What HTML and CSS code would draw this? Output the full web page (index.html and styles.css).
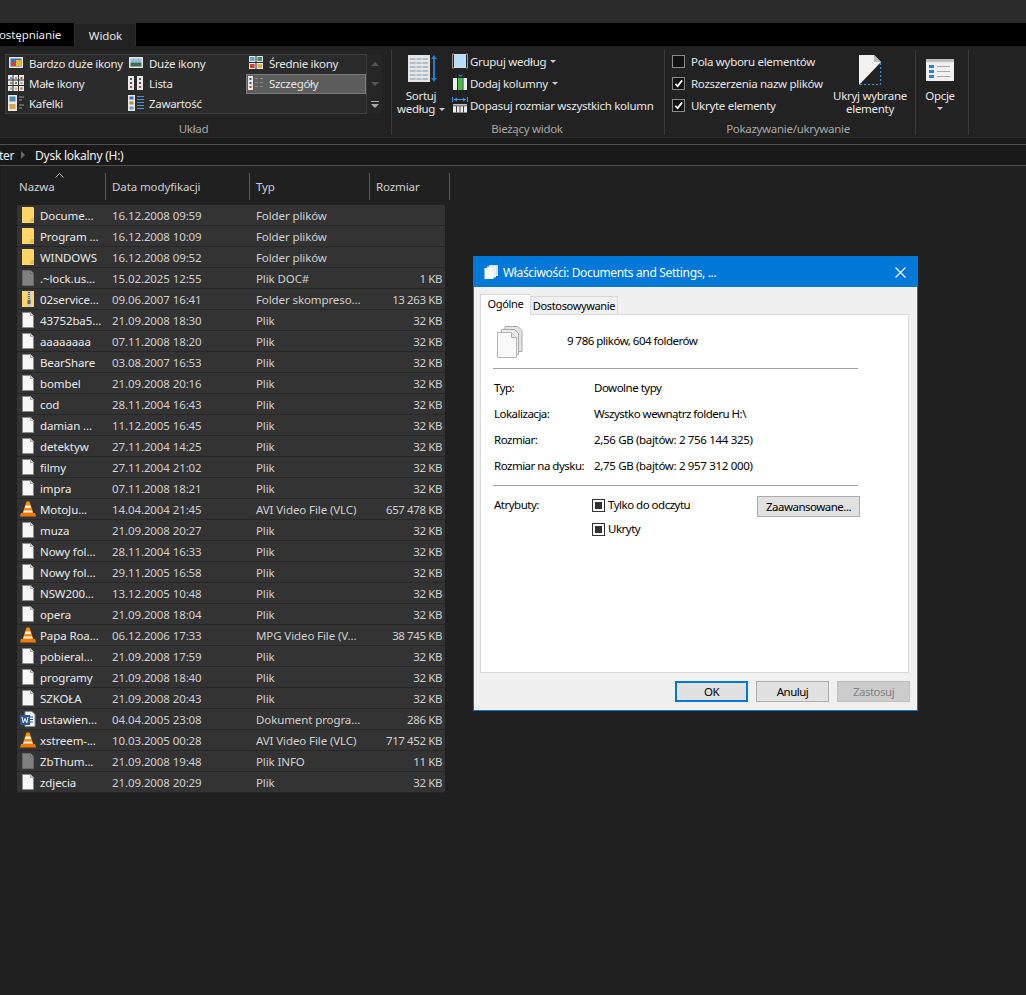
FILE: index.html
```html
<!DOCTYPE html>
<html lang="pl">
<head>
  <meta charset="UTF-8" />
  <title>Dysk lokalny (H:)</title>
  <link rel="stylesheet" href="styles.css">
</head>
<body>
  <svg class="defs" width="0" height="0">
    <symbol id="i-folder" viewBox="0 0 16 16">
      <path d="M2 0h11l1 1v15H2z" fill="#ffd768"/>
      <path d="M11 11h3v4h-4z" fill="#e9b949"/>
    </symbol>
    <symbol id="i-zip" viewBox="0 0 16 16">
      <path d="M2 0h12v16H2z" fill="#ffd768"/>
      <path d="M7 0h4v16H7z" fill="#c9c9c9"/>
      <path d="M8 1h2v1H8zm0 2h2v1H8zm0 2h2v1H8zm0 2h2v1H8zm-.5 2h3v4h-3z" fill="#666"/>
    </symbol>
    <symbol id="i-file" viewBox="0 0 16 16">
      <path d="M2.5 .5h8l3 3v12h-11z" fill="#f7f7f7" stroke="#8c8c8c"/>
      <path d="M10.5 .5v3h3" fill="#ddd" stroke="#aaa"/>
    </symbol>
    <symbol id="i-grey" viewBox="0 0 16 16">
      <path d="M2.5 .5h8l3 3v12h-11z" fill="#808080" stroke="#666"/>
      <path d="M10.5 .5v3h3" fill="#999" stroke="#666"/>
    </symbol>
    <symbol id="i-vlc" viewBox="0 0 16 16">
      <path d="M6.5 .5h3l4 12h-11z" fill="#ff8c00"/>
      <path d="M5.6 4.5h4.8l.8 2.6H4.8zM4 9.5h8l.6 2H3.4z" fill="#eee"/>
      <path d="M1 12h14l1 3.5H0z" fill="#f07800"/>
    </symbol>
    <symbol id="i-word" viewBox="0 0 16 16">
      <path d="M5 .5h7l3 3v12H5z" fill="#f4f4f4" stroke="#8c8c8c"/>
      <path d="M9 6h4M9 8.500h4M9 11h4" stroke="#2b579a"/>
      <path d="M0 4h10v10H0z" fill="#2b579a"/>
      <path d="M2 6l1.300 6 1.700-4.500 1.700 4.500L8 6" fill="none" stroke="#fff"/>
    </symbol>
    <symbol id="i-pages" viewBox="0 0 26 32">
      <path d="M8 .5h13l4 4v21H8z" fill="#e4e4e4" stroke="#aaa"/>
      <path d="M4.500 3.500h13l4 4v21h-17z" fill="#eee" stroke="#aaa"/>
      <path d="M.5 6.500h14l5 5v20H.5z" fill="#f9f9f9" stroke="#b5b5b5"/>
      <path d="M14.500 6.500v5h5" fill="#e6e6e6" stroke="#b5b5b5"/>
    </symbol>
  </svg>

  <div class="titlebar"></div>

  <div class="tabstrip">
    <span class="tab-off">ostępnianie</span>
    <span class="tab-on">Widok</span>
  </div>

  <div class="ribbon">
    <section class="group group-layout">
      <div class="group-body">
        <div class="gallery">
          <div class="gallery-grid">
            <div class="gal-item"><svg class="gal-ico" viewBox="0 0 16 16"><rect x="1" y="2" width="14" height="11" fill="#e8e8e8"/><rect x="2.500" y="3.500" width="11" height="8" fill="#3e6fb0"/><rect x="3" y="7" width="5" height="4" fill="#d9412b"/><rect x="8" y="5" width="5" height="6" fill="#e6b93a"/></svg>Bardzo duże ikony</div>
            <div class="gal-item"><svg class="gal-ico" viewBox="0 0 16 16"><rect x="1" y="2" width="14" height="11" fill="#e8e8e8"/><rect x="2.500" y="3.500" width="11" height="4" fill="#8fc0de"/><rect x="2.500" y="7.500" width="11" height="4" fill="#3f6b55"/></svg>Duże ikony</div>
            <div class="gal-item"><svg class="gal-ico" viewBox="0 0 16 16"><rect x="1" y="1" width="6.500" height="6" fill="#e8e8e8"/><rect x="8.500" y="1" width="6.500" height="6" fill="#e8e8e8"/><rect x="1" y="8" width="6.500" height="6" fill="#e8e8e8"/><rect x="8.500" y="8" width="6.500" height="6" fill="#e8e8e8"/><rect x="2" y="2" width="4.500" height="4" fill="#6f9fc9"/><rect x="9.500" y="2" width="4.500" height="4" fill="#4d8a5c"/><rect x="2" y="9" width="4.500" height="4" fill="#c8402e"/><rect x="9.500" y="9" width="4.500" height="4" fill="#e0b13a"/></svg>Średnie ikony</div>

            <div class="gal-item"><svg class="gal-ico" viewBox="0 0 16 16"><path d="M0 0h16v16H0z" fill="#e8e8e8"/><path d="M5 0v16M10.500 0v16M0 5h16M0 10.500h16" stroke="#2b2b2b"/><path d="M2 2h2v2H2z" fill="#6f9fc9"/><path d="M7 2h2v2H7z" fill="#999"/><path d="M12.500 2h2v2h-2z" fill="#c8402e"/><path d="M2 7h2v2H2z" fill="#b08a3a"/><path d="M7 7h2v2H7z" fill="#4d8a5c"/><path d="M12.500 7h2v2h-2z" fill="#999"/><path d="M2 12.500h2v2H2z" fill="#999"/><path d="M7 12.500h2v2H7z" fill="#e0b13a"/><path d="M12.500 12.500h2v2h-2z" fill="#c8402e"/></svg>Małe ikony</div>
            <div class="gal-item"><svg class="gal-ico" viewBox="0 0 16 16"><path d="M0 1h6v14H0zM9 1h6v14H9z" fill="#e8e8e8"/><path d="M2 3h2v2H2zm9 0h2v2h-2zM2 7h2v2H2zm9 0h2v2h-2z" fill="#555"/><path d="M2 11h2v2H2zm9 0h2v2h-2z" fill="#c8402e"/></svg>Lista</div>
            <div class="gal-item gal-sel"><svg class="gal-ico" viewBox="0 0 16 16"><path d="M0 1h5v14H0z" fill="#e8e8e8"/><path d="M1.500 3h2v2h-2zm0 4h2v2h-2z" fill="#555"/><path d="M1.500 11h2v2h-2z" fill="#c8402e"/><path d="M7 3.500h3m2 0h3M7 7.500h3m2 0h3M7 11.500h3m2 0h3" stroke="#8a8a8a"/></svg>Szczegóły</div>

            <div class="gal-item"><svg class="gal-ico" viewBox="0 0 16 16"><path d="M0 0h9v16H0z" fill="#e8e8e8"/><path d="M1.500 1.500h6v5h-6z" fill="#4d8ab0"/><path d="M1.500 9h6v5h-6z" fill="#d8a44a"/><path d="M11 2h5M11 5h3M11 10h5M11 13h3" stroke="#999"/></svg>Kafelki</div>
            <div class="gal-item"><svg class="gal-ico" viewBox="0 0 16 16"><path d="M0 0h7v16H0z" fill="#e8e8e8"/><path d="M1.500 1.500h4v3h-4z" fill="#3e6fb0"/><path d="M1.500 6.500h4v3h-4z" fill="#b08a3a"/><path d="M1.500 11.500h4v3h-4z" fill="#6f9fc9"/><path d="M9 1.500h7M9 4.500h7M9 7.500h7M9 10.500h7M9 13.500h7" stroke="#4f8fd8"/></svg>Zawartość</div>
          </div>
          <div class="gallery-scroll">
            <span class="sc-up"></span>
            <span class="sc-down"></span>
            <span class="sc-more"></span>
          </div>
        </div>
      </div>
      <div class="group-label">Układ</div>
    </section>

    <section class="group group-view">
      <div class="group-body">
        <div class="big-btn big-sort">
          <svg class="big-ico" width="30" height="28" viewBox="0 0 30 28">
            <rect x="0" y="0" width="22" height="27" fill="#e6e6e6"/>
            <path d="M2 4h18M2 8h18M2 12h18M2 16h18M2 20h18M2 24h18" stroke="#b4bcc6" stroke-width="2"/>
            <path d="M8 2v24M14 2v24" stroke="#e6e6e6"/>
            <path d="M26 2v23" stroke="#1f7fd0" stroke-width="2"/>
            <path d="M23 4l3-4 3 4zM23 23l3 4 3-4z" fill="#1f7fd0"/>
          </svg>
          <span>Sortuj</span>
          <span>według<i class="caret"></i></span>
        </div>
        <div class="cmds">
          <div class="cmd"><svg class="cmd-ico" viewBox="0 0 16 16"><path d="M2 1H.5v14H2M14 1h1.500v14H14" fill="none" stroke="#999"/><rect x="2.500" y="1.500" width="11" height="13" fill="#b5dcf8" stroke="#ddd"/></svg>Grupuj według<i class="caret"></i></div>
          <div class="cmd"><svg class="cmd-ico" viewBox="0 0 16 16"><path d="M6 0h5l-2.500 2z" fill="#1f7fd0"/><rect x="1" y="3" width="14" height="12" fill="#eee"/><rect x="6" y="3" width="4.500" height="12" fill="#3cc13c"/><path d="M5.500 3v12M11 3v12" stroke="#333"/></svg>Dodaj kolumny<i class="caret"></i></div>
          <div class="cmd"><svg class="cmd-ico" viewBox="0 0 16 16"><path d="M.5 0v5M15.500 0v5M2 2.500h12" stroke="#2f95e8"/><path d="M5 .5l-3 2 3 2zM11 .5l3 2-3 2z" fill="#2f95e8"/><rect x="1" y="7" width="14" height="8.500" fill="#eee"/><path d="M1 8.500h14" stroke="#888" stroke-width="2"/><path d="M4.500 9v6.500M8 9v6.500M11.500 9v6.500" stroke="#444"/></svg>Dopasuj rozmiar wszystkich kolumn</div>
        </div>
      </div>
      <div class="group-label">Bieżący widok</div>
    </section>

    <section class="group group-show">
      <div class="group-body">
        <div class="cmds">
          <div class="cmd"><span class="rb-check"></span>Pola wyboru elementów</div>
          <div class="cmd"><span class="rb-check"><svg viewBox="0 0 10 10"><path d="M1.500 5.500l2.500 2.500 5-6.500" fill="none" stroke="#fff" stroke-width="2"/></svg></span>Rozszerzenia nazw plików</div>
          <div class="cmd"><span class="rb-check"><svg viewBox="0 0 10 10"><path d="M1.500 5.500l2.500 2.500 5-6.500" fill="none" stroke="#fff" stroke-width="2"/></svg></span>Ukryte elementy</div>
        </div>
        <div class="big-btn big-hide">
          <svg class="big-ico" width="22" height="30" viewBox="0 0 22 30">
            <path d="M0 0h15l7 7v23H0z" fill="#f2f2f2"/>
            <path d="M22 7L0 30h22z" fill="#222"/>
            <path d="M21.500 8v21.500H1" fill="none" stroke="#2f95e8" stroke-dasharray="2 2"/>
            <path d="M15 0l7 7h-7z" fill="#bbb"/>
          </svg>
          <span>Ukryj wybrane</span>
          <span>elementy</span>
        </div>
      </div>
      <div class="group-label">Pokazywanie/ukrywanie</div>
    </section>

    <section class="group group-opts">
      <div class="group-body">
        <div class="big-btn big-opts">
          <svg class="big-ico" width="28" height="22" viewBox="0 0 28 22">
            <rect width="28" height="22" fill="#f0f0f0"/>
            <rect width="28" height="3" fill="#bdbdbd"/>
            <path d="M3 6h5v3H3zM3 11h5v3H3zM3 16h5v3H3z" fill="#2f7fd0"/>
            <path d="M11 7.500h13M11 12.500h13M11 17.500h13" stroke="#aaa"/>
          </svg>
          <span>Opcje</span>
          <i class="caret caret-below"></i>
        </div>
      </div>
      <div class="group-label"></div>
    </section>
  </div>

  <div class="ribbon-gap"></div>

  <div class="address">
    <span class="crumb-cut">ter</span>
    <svg class="crumb-sep" width="6" height="8" viewBox="0 0 6 8"><path d="M1 0l4 4-4 4z" fill="#6a6a6a"/></svg>
    <span class="crumb">Dysk lokalny (H:)</span>
  </div>

  <main class="files">
    <div class="head">
      <div class="hcol hcol-name">Nazwa<svg class="sort-mark" width="9" height="5" viewBox="0 0 9 5"><path d="M.5 4.500l4-4 4 4" fill="none" stroke="#bbb"/></svg></div>
      <div class="hcol hcol-date">Data modyfikacji</div>
      <div class="hcol hcol-type">Typ</div>
      <div class="hcol hcol-size">Rozmiar</div>
    </div>

    <div class="rows">
      <div class="row"><svg class="ico"><use href="#i-folder"/></svg><span class="name">Docume...</span><span>16.12.2008 09:59</span><span>Folder plików</span><span class="size"></span></div>
      <div class="row"><svg class="ico"><use href="#i-folder"/></svg><span class="name">Program ...</span><span>16.12.2008 10:09</span><span>Folder plików</span><span class="size"></span></div>
      <div class="row"><svg class="ico"><use href="#i-folder"/></svg><span class="name">WINDOWS</span><span>16.12.2008 09:52</span><span>Folder plików</span><span class="size"></span></div>
      <div class="row"><svg class="ico"><use href="#i-grey"/></svg><span class="name">.~lock.us...</span><span>15.02.2025 12:55</span><span>Plik DOC#</span><span class="size">1 KB</span></div>
      <div class="row"><svg class="ico"><use href="#i-zip"/></svg><span class="name">02service...</span><span>09.06.2007 16:41</span><span>Folder skompreso...</span><span class="size">13 263 KB</span></div>
      <div class="row"><svg class="ico"><use href="#i-file"/></svg><span class="name">43752ba5...</span><span>21.09.2008 18:30</span><span>Plik</span><span class="size">32 KB</span></div>
      <div class="row"><svg class="ico"><use href="#i-file"/></svg><span class="name">aaaaaaaa</span><span>07.11.2008 18:20</span><span>Plik</span><span class="size">32 KB</span></div>
      <div class="row"><svg class="ico"><use href="#i-file"/></svg><span class="name">BearShare</span><span>03.08.2007 16:53</span><span>Plik</span><span class="size">32 KB</span></div>
      <div class="row"><svg class="ico"><use href="#i-file"/></svg><span class="name">bombel</span><span>21.09.2008 20:16</span><span>Plik</span><span class="size">32 KB</span></div>
      <div class="row"><svg class="ico"><use href="#i-file"/></svg><span class="name">cod</span><span>28.11.2004 16:43</span><span>Plik</span><span class="size">32 KB</span></div>
      <div class="row"><svg class="ico"><use href="#i-file"/></svg><span class="name">damian ...</span><span>11.12.2005 16:45</span><span>Plik</span><span class="size">32 KB</span></div>
      <div class="row"><svg class="ico"><use href="#i-file"/></svg><span class="name">detektyw</span><span>27.11.2004 14:25</span><span>Plik</span><span class="size">32 KB</span></div>
      <div class="row"><svg class="ico"><use href="#i-file"/></svg><span class="name">filmy</span><span>27.11.2004 21:02</span><span>Plik</span><span class="size">32 KB</span></div>
      <div class="row"><svg class="ico"><use href="#i-file"/></svg><span class="name">impra</span><span>07.11.2008 18:21</span><span>Plik</span><span class="size">32 KB</span></div>
      <div class="row"><svg class="ico"><use href="#i-vlc"/></svg><span class="name">MotoJu...</span><span>14.04.2004 21:45</span><span>AVI Video File (VLC)</span><span class="size">657 478 KB</span></div>
      <div class="row"><svg class="ico"><use href="#i-file"/></svg><span class="name">muza</span><span>21.09.2008 20:27</span><span>Plik</span><span class="size">32 KB</span></div>
      <div class="row"><svg class="ico"><use href="#i-file"/></svg><span class="name">Nowy fol...</span><span>28.11.2004 16:33</span><span>Plik</span><span class="size">32 KB</span></div>
      <div class="row"><svg class="ico"><use href="#i-file"/></svg><span class="name">Nowy fol...</span><span>29.11.2005 16:58</span><span>Plik</span><span class="size">32 KB</span></div>
      <div class="row"><svg class="ico"><use href="#i-file"/></svg><span class="name">NSW200...</span><span>13.12.2005 10:48</span><span>Plik</span><span class="size">32 KB</span></div>
      <div class="row"><svg class="ico"><use href="#i-file"/></svg><span class="name">opera</span><span>21.09.2008 18:04</span><span>Plik</span><span class="size">32 KB</span></div>
      <div class="row"><svg class="ico"><use href="#i-vlc"/></svg><span class="name">Papa Roa...</span><span>06.12.2006 17:33</span><span>MPG Video File (V...</span><span class="size">38 745 KB</span></div>
      <div class="row"><svg class="ico"><use href="#i-file"/></svg><span class="name">pobieral...</span><span>21.09.2008 17:59</span><span>Plik</span><span class="size">32 KB</span></div>
      <div class="row"><svg class="ico"><use href="#i-file"/></svg><span class="name">programy</span><span>21.09.2008 18:40</span><span>Plik</span><span class="size">32 KB</span></div>
      <div class="row"><svg class="ico"><use href="#i-file"/></svg><span class="name">SZKOŁA</span><span>21.09.2008 20:43</span><span>Plik</span><span class="size">32 KB</span></div>
      <div class="row"><svg class="ico"><use href="#i-word"/></svg><span class="name">ustawien...</span><span>04.04.2005 23:08</span><span>Dokument progra...</span><span class="size">286 KB</span></div>
      <div class="row"><svg class="ico"><use href="#i-vlc"/></svg><span class="name">xstreem-...</span><span>10.03.2005 00:28</span><span>AVI Video File (VLC)</span><span class="size">717 452 KB</span></div>
      <div class="row"><svg class="ico"><use href="#i-grey"/></svg><span class="name">ZbThum...</span><span>21.09.2008 19:48</span><span>Plik INFO</span><span class="size">11 KB</span></div>
      <div class="row"><svg class="ico"><use href="#i-file"/></svg><span class="name">zdjecia</span><span>21.09.2008 20:29</span><span>Plik</span><span class="size">32 KB</span></div>
    </div>
  </main>

  <div class="dialog">
    <div class="dlg-title">
      <svg class="dlg-title-ico" width="16" height="16" viewBox="0 0 16 16"><path d="M6 1h9v11H6z" fill="#cfe4f7"/><path d="M4 2.500h9v11H4z" fill="#e8f2fb"/><path d="M1.500 4h7l2 2v9h-9z" fill="#fff"/></svg>
      <span class="dlg-title-text">Właściwości: Documents and Settings, ...</span>
      <svg class="dlg-close" width="11" height="11" viewBox="0 0 11 11"><path d="M.5 .5l10 10M10.500 .5l-10 10" stroke="#fff" stroke-width="1.100"/></svg>
    </div>

    <div class="dlg-tabs">
      <span class="dlg-tab dlg-tab-on">Ogólne</span>
      <span class="dlg-tab">Dostosowywanie</span>
    </div>

    <div class="dlg-panel">
      <div class="dlg-head">
        <svg class="dlg-pages"><use href="#i-pages"/></svg>
        <span class="dlg-count">9 786 plików, 604 folderów</span>
      </div>
      <hr class="dlg-rule">
      <div class="info">
        <span>Typ:</span><span>Dowolne typy</span>
        <span>Lokalizacja:</span><span>Wszystko wewnątrz folderu H:\</span>
        <span>Rozmiar:</span><span class="num">2,56 GB (bajtów: 2 756 144 325)</span>
        <span>Rozmiar na dysku:</span><span class="num">2,75 GB (bajtów: 2 957 312 000)</span>
      </div>
      <hr class="dlg-rule dlg-rule-low">
      <div class="attrs">
        <span class="attrs-label">Atrybuty:</span>
        <div class="attrs-list">
          <div class="tri"><span class="tri-box"></span>Tylko do odczytu</div>
          <div class="tri"><span class="tri-box"></span>Ukryty</div>
        </div>
        <button class="btn btn-adv">Zaawansowane...</button>
      </div>
    </div>

    <div class="dlg-buttons">
      <button class="btn btn-ok">OK</button>
      <button class="btn">Anuluj</button>
      <button class="btn btn-off">Zastosuj</button>
    </div>
  </div>
</body>
</html>
```

FILE: styles.css
```css
:root {
  --bg: #202020;
  --ribbon: #222222;
  --text: #e6e6e6;
  --muted: #a8a8a8;
  --line: #4f4f4f;
  --blue: #0078d7;
  --font: "Noto Sans", "Open Sans", sans-serif;
}

* {
  box-sizing: border-box;
}

html, body {
  height: 100%;
}

body {
  margin: 0;
  height: 995px;
  overflow: hidden;
  background: var(--bg);
  color: var(--text);
  font-family: var(--font);
  font-size: 11.5px;
  letter-spacing: -0.1px;
  position: relative;
}

.defs {
  position: absolute;
}

.titlebar {
  height: 23px;
  background: #2b2b2b;
}

.tabstrip {
  height: 23px;
  background: #000;
  display: flex;
  align-items: stretch;
}

.tab-off {
  width: 75px;
  line-height: 23px;
  margin-left: -1px;
}

.tab-on {
  width: 62px;
  padding-left: 1px;
  text-align: center;
  line-height: 24px;
  background: var(--ribbon);
  border: 1px solid #2c2c2c;
  border-bottom: 0;
}

/* ribbon */
.ribbon {
  height: 92px;
  background: var(--ribbon);
  border-bottom: 1px solid #2e2e2e;
  display: flex;
  letter-spacing: -0.3px;
}

.group {
  display: flex;
  flex-direction: column;
  border-right: 1px solid #3a3a3a;
  margin-top: 4px;
  height: 85px;
}

.group-body {
  flex: 1;
  display: flex;
  min-height: 0;
}

.group-label {
  height: 20px;
  padding-top: 5px;
  line-height: 18px;
  text-align: center;
  color: var(--muted);
}

.group-layout { width: 392px; padding-left: 5px; }
.group-view { width: 273px; }
.group-show { width: 251px; }
.group-opts { width: 53px; }

.group-layout .group-label { padding-right: 9px; }
.group-view .group-label { padding-right: 2px; }
.group-show .group-label { padding-right: 4px; }

.gallery {
  display: flex;
  margin-top: 4px;
  height: 60px;
}

.gallery-grid {
  width: 362px;
  height: 60px;
  background: #2b2b2b;
  box-shadow: inset 0 0 0 1px #3c3c3c;
  display: grid;
  grid-template-columns: repeat(3, 120px);
  grid-auto-rows: 20px;
  padding-left: 1px;
  align-content: start;
}

.gal-item {
  display: flex;
  align-items: center;
  gap: 5px;
  padding: 0 0 2px 1px;
  white-space: nowrap;
  border: 1px solid transparent;
}

.gal-ico {
  width: 16px;
  height: 16px;
  flex: none;
}

.gal-sel {
  background: #5c5c5c;
  border-color: #7c7c7c;
}

.gallery-scroll {
  width: 15px;
  display: flex;
  flex-direction: column;
  background: #262626;
}

.gallery-scroll span {
  height: 20px;
  position: relative;
}

.sc-up::after, .sc-down::after, .sc-more::after {
  content: "";
  position: absolute;
  left: 4px;
  top: 8px;
  border: 4px solid transparent;
  border-top: 0;
  border-bottom: 4px solid #555;
}

.sc-down::after {
  border-bottom: 0;
  border-top: 4px solid #555;
}

.sc-more::after {
  border-bottom: 0;
  border-top: 4px solid #aaa;
  top: 10px;
}

.sc-more::before {
  content: "";
  position: absolute;
  left: 4px;
  top: 7px;
  width: 8px;
  height: 1px;
  background: #aaa;
}

.big-btn {
  display: flex;
  flex-direction: column;
  align-items: center;
  flex: none;
  line-height: 13px;
  white-space: nowrap;
}

.big-ico {
  flex: none;
  margin-bottom: 5px;
}

.big-sort {
  width: 60px;
  padding: 5px 2px 0 0;
}

.big-sort .big-ico {
  margin-left: 4px;
  margin-bottom: 6px;
}

.big-hide {
  width: 74px;
  padding-top: 5px;
}

.big-hide .big-ico {
  margin-bottom: 4px;
}

.big-opts {
  width: 48px;
  padding-top: 9px;
}

.big-opts .big-ico {
  margin-bottom: 8px;
}

.caret {
  display: inline-block;
  vertical-align: middle;
  margin-left: 4px;
  border: 3px solid transparent;
  border-bottom: 0;
  border-top: 3px solid #ccc;
}

.caret-below {
  margin: 5px 0 0;
}

.cmds {
  display: flex;
  flex-direction: column;
}

.cmd {
  height: 22px;
  flex: none;
  display: flex;
  align-items: center;
  white-space: nowrap;
}

.cmd-ico {
  width: 16px;
  height: 16px;
  margin-right: 2px;
  flex: none;
}

.group-show .cmds {
  width: 168px;
  flex: none;
  padding-left: 7px;
}

.rb-check {
  width: 13px;
  height: 13px;
  flex: none;
  margin-right: 6px;
  background: #111;
  border: 1px solid #8a8a8a;
  display: flex;
  padding: 1px;
}

.ribbon-gap {
  height: 7px;
  background: #191919;
  border-bottom: 1px solid var(--line);
}

/* address bar */
.address {
  height: 21px;
  background: #191919;
  border-bottom: 1px solid var(--line);
  display: flex;
  align-items: center;
  color: #f0f0f0;
  font-size: 12px;
  letter-spacing: -0.25px;
}

.crumb-cut {
  width: 21px;
  margin-left: -1px;
}

.crumb-sep {
  margin-right: 9px;
}

/* file list */
.files {
  padding-top: 7px;
  border-left: 1px solid #191919;
}

.head {
  height: 25px;
  display: grid;
  grid-template-columns: 105px 144px 120px 80px;
}

.hcol {
  border-right: 1px solid #5a5a5a;
  line-height: 27px;
  padding-left: 6px;
  color: #cfcfcf;
  position: relative;
}

.hcol-name {
  padding-left: 18px;
}

.sort-mark {
  position: absolute;
  left: 54px;
  top: 0;
}

.rows {
  margin: 7px 0 0 16px;
  width: 428px;
}

.row {
  height: 21px;
  display: grid;
  grid-template-columns: 23px 72px 144px 114px 72px;
  align-items: center;
  background: #333333;
  border-bottom: 1px solid #272727;
  color: #d0d0d0;
  white-space: nowrap;
}

.ico {
  width: 16px;
  height: 16px;
  margin-left: 3px;
}

.name {
  color: #eaeaea;
}

.size {
  text-align: right;
  letter-spacing: -0.4px;
}

/* properties dialog */
.dialog {
  position: absolute;
  left: 473px;
  top: 256px;
  width: 445px;
  height: 455px;
  background: #f0f0f0;
  border: 1px solid var(--blue);
  color: #000;
  display: flex;
  flex-direction: column;
  letter-spacing: -0.5px;
}

.dlg-title {
  height: 30px;
  flex: none;
  background: var(--blue);
  color: #fff;
  display: flex;
  align-items: center;
  padding: 0 10px 0 9px;
  font-size: 12px;
  letter-spacing: -0.35px;
}

.dlg-title-text {
  flex: 1;
  margin-left: 4px;
}

.dlg-close {
  margin-right: 1px;
}

.dlg-tabs {
  height: 27px;
  flex: none;
  padding: 7px 0 0 6px;
  display: flex;
  align-items: flex-end;
  position: relative;
  z-index: 1;
  font-size: 11px;
  letter-spacing: -0.35px;
}

.dlg-tab {
  height: 18px;
  line-height: 17px;
  padding: 0 1px;
  background: #f0f0f0;
  border: 1px solid #d9d9d9;
  border-bottom: 0;
  width: 88px;
  text-align: center;
}

.dlg-tab-on {
  height: 21px;
  width: 50px;
  background: #fff;
  line-height: 18px;
  margin-bottom: -1px;
  border-right: 0;
}

.dlg-panel {
  height: 359px;
  flex: none;
  margin: 0 8px 0 6px;
  background: #fff;
  border: 1px solid #d9d9d9;
  padding: 0 0 0 12px;
}

.dlg-head {
  height: 53px;
  display: flex;
  align-items: center;
}

.dlg-pages {
  width: 26px;
  height: 32px;
  margin-left: 4px;
  margin-right: 44px;
  flex: none;
}

.dlg-count {
  margin-top: -2px;
}

.dlg-rule {
  margin: 0;
  width: 365px;
  height: 1px;
  border: 0;
  background: #a0a0a0;
}

.dlg-rule-low {
  margin-top: 7px;
}

.info {
  display: grid;
  grid-template-columns: 100px 1fr;
  grid-auto-rows: 26px;
  padding: 5px 0 0 1px;
  align-items: center;
}

.num {
  letter-spacing: -0.33px;
}

.attrs {
  display: flex;
  padding: 10px 0 0 1px;
  width: 367px;
}

.attrs-label {
  width: 98px;
  flex: none;
  line-height: 18px;
}

.attrs-list {
  flex: 1;
}

.tri {
  height: 24px;
  display: flex;
  align-items: flex-start;
  line-height: 18px;
}

.tri-box {
  width: 13px;
  height: 13px;
  margin: 3px 3px 0 0;
  border: 1px solid #333;
  padding: 2px;
  background: #333 content-box;
  flex: none;
}

.btn {
  width: 73px;
  height: 21px;
  padding: 0;
  font: inherit;
  letter-spacing: inherit;
  color: #000;
  background: #e1e1e1;
  border: 1px solid #adadad;
}

.btn-adv {
  width: 103px;
  flex: none;
}

.btn-ok {
  border: 2px solid var(--blue);
}

.btn-off {
  background: #cccccc;
  border-color: #bfbfbf;
  color: #838383;
}

.dlg-buttons {
  display: flex;
  justify-content: flex-end;
  gap: 8px;
  padding: 8px 7px 0 0;
}
```
